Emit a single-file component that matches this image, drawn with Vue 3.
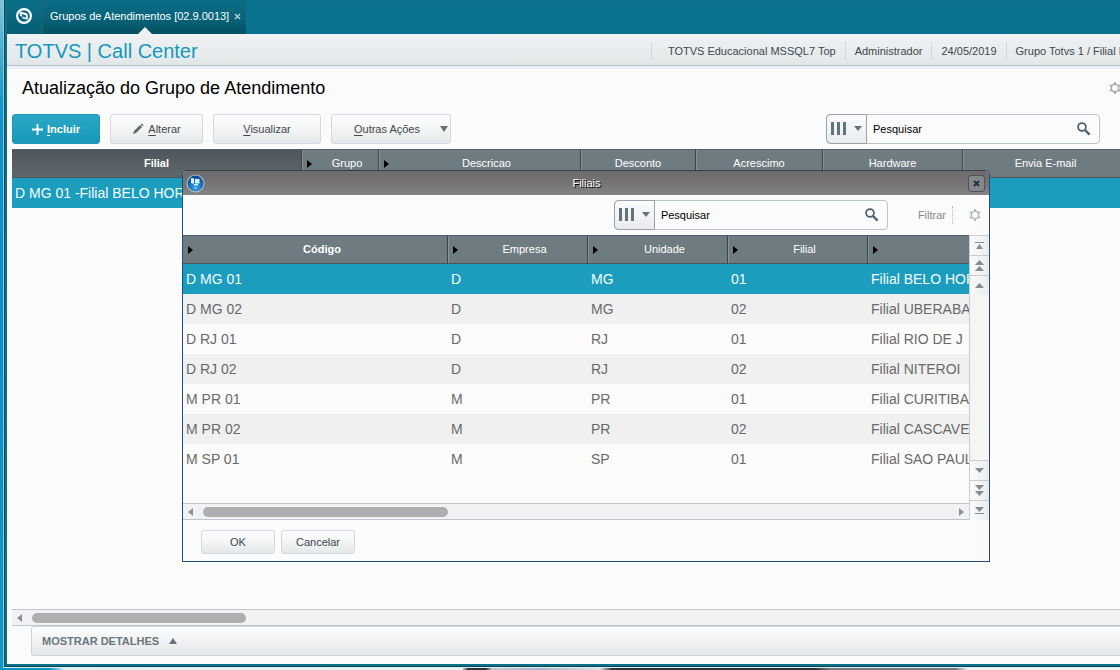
<template>
    <div class="desktop">
        <div class="window">
            <div class="frame">
                <header class="top-bar">
                    <button class="logo-button" aria-label="TOTVS">
                        <svg width="18" height="18" viewBox="0 0 18 18">
                            <circle cx="9" cy="9" r="6.9" fill="none" stroke="#fff" stroke-width="2.2" />
                            <path d="M4.6 5.4 Q5.4 4.6 7 5 L11.4 6.2 Q12.8 6.8 12.8 8.4 L12.8 12.8 L7.6 11.4 L7.2 9.6 L5 9 Z" fill="#fff" />
                            <path d="M6.6 7 L10.8 8.2 L11 10.8 L7.4 9.8 Z" fill="#0c6a80" />
                        </svg>
                    </button>
                    <div class="tab">
                        <span>Grupos de Atendimentos [02.9.0013]</span>
                        <button class="tab-close" aria-label="Fechar aba">
                            <svg width="7" height="7" viewBox="0 0 7 7">
                                <path d="M1 1 L6 6 M6 1 L1 6" stroke="#b4d3da" stroke-width="1.3" />
                            </svg>
                        </button>
                        <span class="tab-notch"></span>
                    </div>
                </header>

                <div class="app-header">
                    <h1>TOTVS | Call Center</h1>
                    <ul class="session">
                        <li v-for="item in session" :key="item">{{ item }}</li>
                    </ul>
                </div>

                <main>
                    <div class="title-row">
                        <h2>Atualização do Grupo de Atendimento</h2>
                        <button class="gear" aria-label="Configurações">
                            <svg width="12" height="12" viewBox="0 0 12 12">
                                <circle cx="6" cy="6" r="3.7" fill="none" stroke="#a3aab0" stroke-width="1.5" />
                                <path :d="gearTeeth" stroke="#a3aab0" stroke-width="2" />
                            </svg>
                        </button>
                    </div>

                    <div class="toolbar">
                        <button class="btn primary">
                            <svg width="11" height="11" viewBox="0 0 11 11">
                                <path d="M5.5 0 V11 M0 5.5 H11" stroke="#fff" stroke-width="1.8" />
                            </svg>
                            <span><u>I</u>ncluir</span>
                        </button>
                        <button class="btn edit">
                            <svg width="12" height="12" viewBox="0 0 12 12">
                                <path d="M1 11 L2 8 L8 2 L10 4 L4 10 Z M8.7 1.4 L9.8 0.5 L11.5 2.2 L10.6 3.3 Z" fill="#5f686d" />
                            </svg>
                            <span><u>A</u>lterar</span>
                        </button>
                        <button class="btn view"><span><u>V</u>isualizar</span></button>
                        <button class="btn more">
                            <span><u>O</u>utras Ações</span>
                            <svg width="8" height="6" viewBox="0 0 8 6">
                                <path d="M0 0 H8 L4 6 Z" fill="#66737a" />
                            </svg>
                        </button>
                        <div class="search">
                            <button class="search-columns" aria-label="Colunas">
                                <svg width="31" height="14" viewBox="0 0 31 14">
                                    <path d="M0 0 H3 V13 H0 Z M6 0 H9 V13 H6 Z M12 0 H15 V13 H12 Z M23 4 H31 L27 9 Z" fill="#64737a" />
                                </svg>
                            </button>
                            <input v-model="mainSearch" type="text" placeholder="Pesquisar" aria-label="Pesquisar grupos" />
                            <button class="search-go" aria-label="Buscar">
                                <svg width="14" height="14" viewBox="0 0 14 14">
                                    <circle cx="5" cy="5" r="3.9" fill="none" stroke="#4d626b" stroke-width="1.8" />
                                    <path d="M8 8 L12.6 12.6" stroke="#4d626b" stroke-width="2.4" />
                                </svg>
                            </button>
                        </div>
                    </div>

                    <div class="main-grid">
                        <table>
                            <colgroup>
                                <col v-for="col in mainColumns" :key="col.label" :style="{ width: col.width + 'px' }" />
                            </colgroup>
                            <thead>
                                <tr>
                                    <th v-for="(col, index) in mainColumns" :key="col.label" :class="{ sorted: index === 0 }">
                                        <div class="head">
                                            <span v-if="col.arrow" class="head-arrow"></span>
                                            <span class="head-label">{{ col.label }}</span>
                                        </div>
                                    </th>
                                </tr>
                            </thead>
                            <tbody>
                                <tr class="selected">
                                    <td>D MG 01 -Filial BELO HOR</td>
                                    <td v-for="n in mainColumns.length - 1" :key="n"></td>
                                </tr>
                            </tbody>
                        </table>
                    </div>

                    <div class="h-scroll">
                        <span class="arrow-left"></span>
                        <span class="thumb main-thumb"></span>
                    </div>
                    <button class="details">
                        MOSTRAR DETALHES
                        <svg width="8" height="6" viewBox="0 0 8 6">
                            <path d="M0 6 H8 L4 0 Z" fill="#66737a" />
                        </svg>
                    </button>
                </main>
            </div>
        </div>

        <div class="dialog" role="dialog" aria-labelledby="dialog-title">
            <div class="dialog-title">
                <svg width="19" height="19" viewBox="0 0 19 19">
                    <defs>
                        <radialGradient id="orb" cx="50%" cy="75%" r="70%">
                            <stop offset="0" stop-color="#35a9ea" />
                            <stop offset="1" stop-color="#064a94" />
                        </radialGradient>
                    </defs>
                    <circle cx="9.5" cy="9.5" r="9" fill="#b5bfc8" />
                    <circle cx="9.5" cy="9.5" r="7.9" fill="url(#orb)" />
                    <path d="M5 4 L8 4.6 V10 L5 9 Z M9 5 H13.5 V9.5 H9 Z M8 10 H12 V11.5 H8 Z" fill="#d5efff" />
                    <circle cx="9.5" cy="14" r="1" fill="#8fd6ff" />
                </svg>
                <h3 id="dialog-title">Filiais</h3>
                <button class="dialog-close" aria-label="Fechar">
                    <svg width="7" height="7" viewBox="0 0 7 7">
                        <path d="M1 1 L6 6 M6 1 L1 6" stroke="#26323c" stroke-width="2" />
                    </svg>
                </button>
            </div>

            <div class="dialog-tools">
                <div class="search">
                    <button class="search-columns" aria-label="Colunas">
                        <svg width="31" height="14" viewBox="0 0 31 14">
                            <path d="M0 0 H3 V13 H0 Z M6 0 H9 V13 H6 Z M12 0 H15 V13 H12 Z M23 4 H31 L27 9 Z" fill="#64737a" />
                        </svg>
                    </button>
                    <input v-model="branchSearch" type="text" placeholder="Pesquisar" aria-label="Pesquisar filiais" />
                    <button class="search-go" aria-label="Buscar">
                        <svg width="14" height="14" viewBox="0 0 14 14">
                            <circle cx="5" cy="5" r="3.9" fill="none" stroke="#4d626b" stroke-width="1.8" />
                            <path d="M8 8 L12.6 12.6" stroke="#4d626b" stroke-width="2.4" />
                        </svg>
                    </button>
                </div>
                <button class="filter">Filtrar</button>
                <button class="gear" aria-label="Configurações">
                    <svg width="12" height="12" viewBox="0 0 12 12">
                        <circle cx="6" cy="6" r="3.7" fill="none" stroke="#b3b9be" stroke-width="1.5" />
                        <path :d="gearTeeth" stroke="#b3b9be" stroke-width="2" />
                    </svg>
                </button>
            </div>

            <div class="dialog-grid">
                <div class="grid-area">
                    <div class="grid-rows">
                        <table>
                            <colgroup>
                                <col v-for="col in branchColumns" :key="col.key" :style="{ width: col.width + 'px' }" />
                            </colgroup>
                            <thead>
                                <tr>
                                    <th v-for="(col, index) in branchColumns" :key="col.key" :class="{ strong: index === 0 }">
                                        <div class="head">
                                            <span class="head-arrow"></span>
                                            <span class="head-label">{{ col.label }}</span>
                                        </div>
                                    </th>
                                </tr>
                            </thead>
                            <tbody>
                                <tr v-for="(branch, index) in branches" :key="branch.code"
                                    :class="{ selected: index === selectedIndex, striped: index % 2 === 1 }"
                                    @click="selectedIndex = index">
                                    <td v-for="col in branchColumns" :key="col.key">{{ branch[col.key] }}</td>
                                </tr>
                            </tbody>
                        </table>
                    </div>
                    <div class="h-scroll">
                        <span class="arrow-left"></span>
                        <span class="thumb branch-thumb"></span>
                        <span class="arrow-right"></span>
                    </div>
                </div>
                <div class="v-scroll">
                    <button v-for="button in scrollUp" :key="button.label" :aria-label="button.label">
                        <svg width="9" height="13" viewBox="0 0 9 13"><path :d="button.path" fill="#858b90" /></svg>
                    </button>
                    <span class="track"></span>
                    <button v-for="button in scrollDown" :key="button.label" :aria-label="button.label">
                        <svg width="9" height="13" viewBox="0 0 9 13"><path :d="button.path" fill="#858b90" /></svg>
                    </button>
                </div>
            </div>

            <div class="dialog-actions">
                <button class="btn">OK</button>
                <button class="btn">Cancelar</button>
            </div>
        </div>
    </div>
</template>

<script setup>
import { ref } from 'vue';

const mainSearch = ref('');
const branchSearch = ref('');
const selectedIndex = ref(0);

const gearTeeth = 'M6 0 V2 M6 10 V12 M0.8 3 L2.5 4 M9.5 8 L11.2 9 M0.8 9 L2.5 8 M9.5 4 L11.2 3';

const session = ['TOTVS Educacional MSSQL7 Top', 'Administrador', '24/05/2019', 'Grupo Totvs 1 / Filial B'];

const mainColumns = [
    { label: 'Filial', width: 290 },
    { label: 'Grupo', width: 77, arrow: true },
    { label: 'Descricao', width: 202, arrow: true },
    { label: 'Desconto', width: 115 },
    { label: 'Acrescimo', width: 127 },
    { label: 'Hardware', width: 140 },
    { label: 'Envia E-mail', width: 166 },
];

const branchColumns = [
    { key: 'code', label: 'Código', width: 265 },
    { key: 'company', label: 'Empresa', width: 140 },
    { key: 'unit', label: 'Unidade', width: 140 },
    { key: 'branch', label: 'Filial', width: 140 },
    { key: 'name', label: '', width: 140 },
];

const branches = [
    { code: 'D MG 01', company: 'D', unit: 'MG', branch: '01', name: 'Filial BELO HOR' },
    { code: 'D MG 02', company: 'D', unit: 'MG', branch: '02', name: 'Filial UBERABA' },
    { code: 'D RJ 01', company: 'D', unit: 'RJ', branch: '01', name: 'Filial RIO DE J' },
    { code: 'D RJ 02', company: 'D', unit: 'RJ', branch: '02', name: 'Filial NITEROI' },
    { code: 'M PR 01', company: 'M', unit: 'PR', branch: '01', name: 'Filial CURITIBA' },
    { code: 'M PR 02', company: 'M', unit: 'PR', branch: '02', name: 'Filial CASCAVEL' },
    { code: 'M SP 01', company: 'M', unit: 'SP', branch: '01', name: 'Filial SAO PAUL' },
];

const scrollUp = [
    { label: 'Primeiro', path: 'M0 3 H9 V4 H0 Z M1 10 H8 L4.5 5 Z' },
    { label: 'Página anterior', path: 'M0 6 H9 L4.5 1 Z M0 12 H9 L4.5 7 Z' },
    { label: 'Anterior', path: 'M0 9 H9 L4.5 4 Z' },
];

const scrollDown = [
    { label: 'Próximo', path: 'M0 4 H9 L4.5 9 Z' },
    { label: 'Próxima página', path: 'M0 1 H9 L4.5 6 Z M0 7 H9 L4.5 12 Z' },
    { label: 'Último', path: 'M0 3 H9 L4.5 8 Z M0 9 H9 V10 H0 Z' },
];
</script>

<style>
body {
    margin: 0;
    overflow: hidden;
}
</style>

<style scoped>
* {
    box-sizing: border-box;
}

.desktop {
    position: relative;
    display: flex;
    height: 100vh;
    padding: 0 0 2px 3px;
    overflow: hidden;
    font-family: "Liberation Sans", Arial, sans-serif;
    font-size: 11px;
    color: #40484d;
    background: linear-gradient(to right, #0b95c4 0, #0b95c4 50px, #dff1f7 64px, #e6f2f8 462px, #33343b 468px, #33343b 486px, #c3c8d4 492px, #a9b4c6 540px, #dfe3ee 600px, #33343b 612px, #33343b 815px, #777883 830px, #777883 955px, #f0f2f8 968px);
}

.desktop::before {
    content: "";
    position: absolute;
    top: 0;
    bottom: 2px;
    left: 0;
    width: 3px;
    background: linear-gradient(#7cc6dc 0, #3fa9cb 60px, #0f93cd 110px, #0b8fc9 300px, #1196c8 100%);
}

button {
    font-family: inherit;
    font-size: inherit;
    color: inherit;
    padding: 0;
    border: none;
    background: none;
    cursor: pointer;
}

h1,
h2,
h3,
ul {
    margin: 0;
    padding: 0;
    font-weight: normal;
}

svg {
    display: block;
    flex: none;
}

.window {
    flex: 1;
    min-width: 0;
    display: flex;
    padding: 0 0 1px 1px;
    border-left: 1px solid #8ccbdc;
    border-bottom: 1px solid #d9eef3;
    background: #0c4756;
}

.frame {
    flex: 1;
    min-width: 0;
    display: flex;
    flex-direction: column;
    overflow: hidden;
    border-left: 2px solid #0b7188;
    border-bottom: 2px solid #0b7188;
    background: #fbfbfb;
}

.top-bar {
    display: flex;
    height: 34px;
    background: linear-gradient(#0a728e, #0a7490);
}

.logo-button {
    display: flex;
    align-items: center;
    justify-content: center;
    width: 36px;
    padding: 0 2px 2px 0;
    border-right: 1px solid #2a5e6c;
    background: linear-gradient(#0b7089, #075f75);
}

.tab {
    position: relative;
    display: flex;
    align-items: center;
    gap: 5px;
    padding: 0 5px 2px 7px;
    color: #fff;
    background: linear-gradient(#0a6d86 0, #08637a 55%, #05505f 100%);
}

.tab-notch {
    position: absolute;
    bottom: 0;
    left: 50%;
    margin-left: -7px;
    border: 7px solid transparent;
    border-top: none;
    border-bottom-color: #eff2f5;
}

.app-header {
    display: flex;
    align-items: center;
    justify-content: space-between;
    height: 32px;
    padding-left: 8px;
    border-bottom: 1px solid #b9c4cf;
    background: linear-gradient(#f0f2f4, #e1e7e8);
}

h1 {
    padding-top: 4px;
    font-size: 20px;
    color: #1597bd;
}

.session {
    display: flex;
    margin-right: -6px;
    padding-top: 2px;
    list-style: none;
    white-space: nowrap;
}

.session li {
    padding: 0 9px;
    line-height: 18px;
    border-left: 1px solid #d3d6d9;
}

.session li:first-child {
    padding-left: 16px;
}

.session li:last-child {
    padding-right: 0;
}

main {
    flex: 1;
    min-height: 0;
    display: flex;
    flex-direction: column;
    padding: 0 0 8px 5px;
    border-top: 3px solid #eceff5;
}

.title-row {
    display: flex;
    align-items: center;
    justify-content: space-between;
    height: 38px;
    padding-left: 10px;
}

h2 {
    font-size: 18px;
    color: #000;
}

.title-row .gear {
    margin-right: -1px;
}

.toolbar {
    display: flex;
    gap: 10px;
    padding: 7px 20px 5px 0;
}

.btn {
    display: flex;
    align-items: center;
    justify-content: center;
    gap: 4px;
    height: 30px;
    border: 1px solid #d5d8e0;
    border-radius: 3px;
    background: linear-gradient(#fbfbfb 20%, #e5e8e9);
}

.btn u {
    text-underline-offset: 2px;
}

.primary {
    width: 88px;
    font-weight: bold;
    color: #fff;
    border-color: #2196b6;
    background: linear-gradient(#2ba7c6, #1798b9);
}

.edit {
    width: 93px;
}

.view {
    width: 108px;
}

.more {
    width: 120px;
    gap: 20px;
    justify-content: flex-end;
    padding-right: 2px;
}

.search {
    display: flex;
    width: 274px;
    height: 30px;
    border: 1px solid #bcc3ca;
    border-radius: 4px;
    background: #fbfbfb;
}

.toolbar .search {
    margin-left: auto;
}

.search-columns {
    display: flex;
    align-items: center;
    justify-content: center;
    width: 41px;
    margin: -1px 0 -1px -1px;
    border: 1px solid #9aa1a9;
    border-radius: 5px 0 0 5px;
    background: linear-gradient(#fbfbfb, #e9ebef);
}

.search input {
    flex: 1;
    min-width: 0;
    padding: 0 6px;
    font-family: inherit;
    font-size: 11px;
    color: #000;
    border: none;
    outline: none;
    background: transparent;
}

.search input::placeholder {
    color: #000;
    opacity: 1;
}

.search-go {
    padding-right: 8px;
}

.main-grid,
.grid-rows {
    flex: 1;
    min-height: 0;
    overflow: hidden;
}

table {
    width: max-content;
    table-layout: fixed;
    border-collapse: separate;
    border-spacing: 0;
}

th {
    height: 29px;
    padding: 0 0 2px;
    font-weight: normal;
    color: #fff;
    border-top: 1px solid #566369;
    border-right: 1px solid #39444a;
    border-bottom: 1px solid #4a565c;
    background: #6e7c81;
}

th + th {
    box-shadow: inset 1px 0 #87949a;
}

.sorted {
    background: linear-gradient(#4d565c, #5d686d);
}

.sorted,
.strong {
    font-weight: bold;
}

.head {
    display: flex;
    align-items: center;
}

.head-arrow {
    margin: 2px 4px 0 5px;
    border: 4px solid transparent;
    border-left: 5px solid #000;
    border-right: none;
}

.head-label {
    flex: 1;
    text-align: center;
}

td {
    height: 30px;
    padding: 0 3px;
    font-size: 14px;
    color: #696969;
    white-space: nowrap;
    overflow: hidden;
}

.striped td {
    background: #f0f0f1;
}

.selected td {
    color: #f4fbfd;
    background: #1c9dbe;
}

.h-scroll {
    display: flex;
    align-items: center;
    height: 17px;
    flex: none;
    padding: 0 5px;
    border-top: 1px solid #bfc5ca;
    border-bottom: 1px solid #bfc5ca;
    background: #f1f2f4;
}

.arrow-left {
    border: 4px solid transparent;
    border-right: 5px solid #8a9095;
    border-left: none;
}

.arrow-right {
    margin-left: auto;
    border: 4px solid transparent;
    border-left: 5px solid #8a9095;
    border-right: none;
}

.thumb {
    height: 10px;
    margin-left: 10px;
    border-radius: 5px;
    background: #adafaf;
}

.main-thumb {
    width: 214px;
}

.branch-thumb {
    width: 245px;
}

.details {
    display: flex;
    align-items: center;
    gap: 10px;
    height: 30px;
    flex: none;
    margin-left: 19px;
    padding-left: 10px;
    font-size: 11px;
    font-weight: bold;
    color: #6b777d;
    border: 1px solid #cfd4d8;
    border-right: none;
    border-radius: 3px 0 0 3px;
    background: linear-gradient(#fbfbfb 10%, #e3e6e8);
}

.dialog {
    position: absolute;
    top: 170px;
    left: 182px;
    display: flex;
    flex-direction: column;
    width: 808px;
    height: 392px;
    border: 1px solid #1f4c7c;
    border-top-color: #3c4043;
    border-radius: 5px 5px 0 0;
    overflow: hidden;
    background: #fbfbfb;
}

.dialog-title {
    display: flex;
    align-items: center;
    justify-content: space-between;
    height: 24px;
    padding: 0 4px 0 3px;
    color: #fff;
    background: linear-gradient(#6c6c6e, #757374 50%, #858585);
}

h3 {
    font-size: 11px;
    text-shadow: 1px 1px #000;
}

.dialog-close {
    display: flex;
    align-items: center;
    justify-content: center;
    width: 17px;
    height: 17px;
    border: 1px solid #4d5358;
    border-radius: 3px;
    background: #85888b;
}

.dialog-tools {
    display: flex;
    align-items: center;
    justify-content: flex-end;
    height: 40px;
    padding-right: 8px;
}

.filter {
    margin: 0 16px 0 30px;
    padding-right: 6px;
    line-height: 18px;
    color: #84888a;
    border-right: 1px dotted #b3b7ba;
}

.dialog-grid {
    flex: 1;
    min-height: 0;
    display: flex;
}

.grid-area {
    flex: 1;
    min-width: 0;
    display: flex;
    flex-direction: column;
}

.v-scroll {
    display: flex;
    flex-direction: column;
    width: 20px;
    border-left: 1px solid #c9cdd1;
    background: #f5f5f6;
}

.v-scroll button {
    display: flex;
    align-items: center;
    justify-content: center;
    height: 20px;
    border-top: 1px solid #c9cdd1;
    background: linear-gradient(to right, #fbfbfb, #e9ebee);
}

.track {
    flex: 1;
}

.dialog-actions {
    display: flex;
    gap: 6px;
    padding: 10px 18px 7px;
}

.dialog-actions .btn {
    width: 74px;
    height: 24px;
}
</style>
